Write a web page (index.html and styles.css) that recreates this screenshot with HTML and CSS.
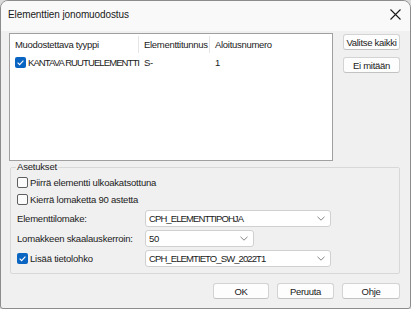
FILE: index.html
```html
<!DOCTYPE html>
<html lang="fi">
<head>
  <meta charset="UTF-8">
  <meta name="viewport" content="width=device-width, initial-scale=1.0">
  <title>Elementtien jonomuodostus</title>
  <link rel="stylesheet" href="styles.css">
</head>
<body>

  <div class="window">
    <div class="titlebar">
      <span class="title">Elementtien jonomuodostus</span>
      <svg class="close" width="11" height="11" viewBox="0 0 11 11">
        <path d="M0.5 0.5 L10.5 10.5 M10.5 0.5 L0.5 10.5" stroke="#1a1a1a" stroke-width="1.1" fill="none"/>
      </svg>
    </div>

    <div class="content">
      <div class="top">
        <div class="list">
          <div class="list-head">
            <div class="col c1">Muodostettava tyyppi</div>
            <div class="col c2">Elementtitunnus</div>
            <div class="col c3">Aloitusnumero</div>
          </div>
          <div class="list-row">
            <div class="col c1">
              <span class="check checked">
                <svg width="11" height="11" viewBox="0 0 11 11"><path d="M2.6 5.7 L4.6 7.6 L8.4 3.6" stroke="#fff" stroke-width="1.1" fill="none"/></svg>
              </span>
              <span class="caps">KANTAVA RUUTUELEMENTTI</span>
            </div>
            <div class="col c2">S-</div>
            <div class="col c3">1</div>
          </div>
        </div>
        <div class="side-buttons">
          <button class="btn">Valitse kaikki</button>
          <button class="btn">Ei mitään</button>
        </div>
      </div>

      <fieldset class="group">
        <legend>Asetukset</legend>
        <div class="check-row">
          <span class="check"></span>
          <span>Piirrä elementti ulkoakatsottuna</span>
        </div>
        <div class="check-row">
          <span class="check"></span>
          <span>Kierrä lomaketta 90 astetta</span>
        </div>
        <div class="form-row">
          <span class="label">Elementtilomake:</span>
          <div class="combo wide">
            <span class="caps">CPH_ELEMENTTIPOHJA</span>
            <svg class="chevron" width="8" height="5" viewBox="0 0 8 5"><path d="M0.5 0.8 L4 4.2 L7.5 0.8" stroke="#777" stroke-width="0.9" fill="none"/></svg>
          </div>
        </div>
        <div class="form-row">
          <span class="label">Lomakkeen skaalauskerroin:</span>
          <div class="combo narrow">
            <span>50</span>
            <svg class="chevron" width="8" height="5" viewBox="0 0 8 5"><path d="M0.5 0.8 L4 4.2 L7.5 0.8" stroke="#777" stroke-width="0.9" fill="none"/></svg>
          </div>
        </div>
        <div class="form-row">
          <span class="label">
            <span class="check checked">
              <svg width="11" height="11" viewBox="0 0 11 11"><path d="M2.6 5.7 L4.6 7.6 L8.4 3.6" stroke="#fff" stroke-width="1.1" fill="none"/></svg>
            </span>
            Lisää tietolohko
          </span>
          <div class="combo wide">
            <span class="caps">CPH_ELEMTIETO_SW_2022T1</span>
            <svg class="chevron" width="8" height="5" viewBox="0 0 8 5"><path d="M0.5 0.8 L4 4.2 L7.5 0.8" stroke="#777" stroke-width="0.9" fill="none"/></svg>
          </div>
        </div>
      </fieldset>

      <div class="footer-buttons">
        <button class="btn ok">OK</button>
        <button class="btn cancel">Peruuta</button>
        <button class="btn help">Ohje</button>
      </div>
    </div>
  </div>

</body>
</html>
```

FILE: styles.css
```css
body {
  margin: 0;
  background-color: #dadada;
  font-family: "Liberation Sans", Arial, sans-serif;
  font-size: 9.5px;
  letter-spacing: -0.2px;
  color: #1b1b1b;
}
.window {
  box-sizing: border-box;
  width: 411px;
  height: 309px;
  border: 1px solid #8c8c8c;
  border-radius: 8px 8px 3px 3px;
  background-color: #f0f0f0;
  overflow: hidden;
}
.titlebar {
  height: 30px;
  background-color: #f9f9f9;
  display: flex;
  align-items: center;
  justify-content: space-between;
  padding: 0 8px 4px 7px;
  box-sizing: border-box;
}
.title {
  font-size: 10px;
  letter-spacing: -0.1px;
  color: #1a1a1a;
}
.close {
  margin-right: 1px;
}
.content {
  padding: 2px 9px 0 8px;
}
.top {
  display: flex;
  height: 128px;
}
.list {
  box-sizing: border-box;
  width: 324px;
  height: 128px;
  background-color: #fff;
  border: 1px solid #a0a0a0;
  letter-spacing: -0.3px;
}
.list-head, .list-row {
  display: flex;
}
.list-head {
  height: 20px;
  align-items: center;
}
.list-row {
  height: 16px;
  align-items: center;
}
.col {
  box-sizing: border-box;
  padding-left: 5px;
  white-space: nowrap;
}
.list-head .col {
  height: 17px;
  line-height: 17px;
  margin-top: 1px;
}
.list-head .c1, .list-head .c2 {
  border-right: 1px solid #e5e5e5;
}
.c1 {
  width: 129px;
  display: flex;
  align-items: center;
}
.c2 {
  width: 71px;
}
.c3 {
  flex: 1;
}
.caps {
  letter-spacing: -0.9px;
}
.check {
  box-sizing: border-box;
  display: inline-flex;
  width: 11px;
  height: 11px;
  border: 1px solid #5f5f5f;
  border-radius: 2px;
  background-color: #fbfbfb;
  margin-right: 2px;
  flex-shrink: 0;
}
.check.checked {
  border: none;
  background-color: #0a64c2;
}
.side-buttons {
  display: flex;
  flex-direction: column;
  gap: 7px;
  margin-left: 10px;
  padding-top: 1px;
}
.btn {
  box-sizing: border-box;
  height: 16px;
  padding: 0;
  font-family: "Liberation Sans", Arial, sans-serif;
  font-size: 9.5px;
  letter-spacing: -0.3px;
  color: #1b1b1b;
  background-color: #fdfdfd;
  border: 1px solid #d3d3d3;
  border-bottom-color: #c2c2c2;
  border-radius: 3px;
  white-space: nowrap;
}
.side-buttons .btn {
  width: 57px;
}
.group {
  box-sizing: border-box;
  width: 390px;
  margin: 0 0 0 1px;
  padding: 1px 0 4px 6px;
  border: 1px solid #d8d8d8;
  border-radius: 2px;
  height: 113px;
}
.group legend {
  padding: 0 1px;
  margin-left: -1px;
  line-height: 12px;
}
.check-row {
  display: flex;
  align-items: center;
  height: 17px;
}
.form-row {
  display: flex;
  align-items: center;
  height: 20px;
}
.label {
  width: 128px;
  display: flex;
  align-items: center;
}
.combo {
  box-sizing: border-box;
  height: 17px;
  display: flex;
  align-items: center;
  justify-content: space-between;
  padding: 0 5px 0 3px;
  background-color: #fff;
  border: 1px solid #d0d0d0;
  border-radius: 3px;
}
.combo.wide {
  width: 186px;
}
.combo.narrow {
  width: 109px;
}
.footer-buttons {
  display: flex;
  justify-content: flex-end;
  gap: 8px;
  margin-top: 9px;
  margin-right: 1px;
}
.ok {
  width: 56px;
}
.cancel {
  width: 57px;
}
.help {
  width: 58px;
}
```
